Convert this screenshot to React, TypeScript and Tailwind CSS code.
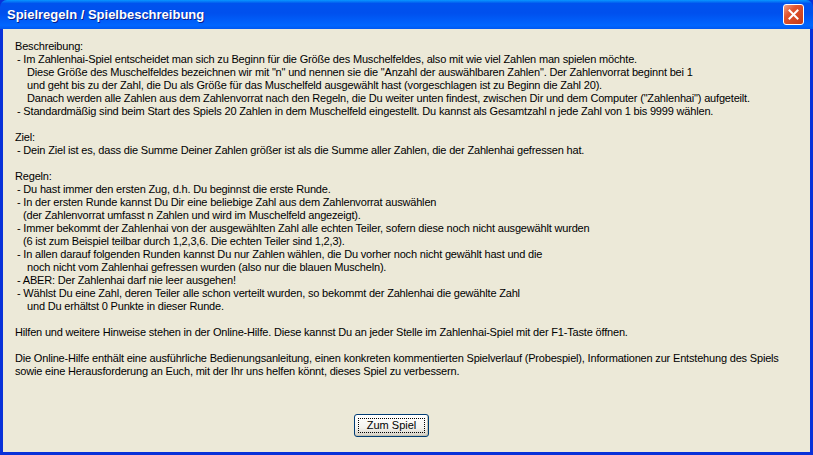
import React from "react";

type Line = { t: string; indent?: number };

const lines: (Line | null)[] = [
  { t: "Beschreibung:" },
  { t: "- Im Zahlenhai-Spiel entscheidet man sich zu Beginn für die Größe des Muschelfeldes, also mit wie viel Zahlen man spielen möchte.", indent: 2 },
  { t: "Diese Größe des Muschelfeldes bezeichnen wir mit \"n\" und nennen sie die \"Anzahl der auswählbaren Zahlen\". Der Zahlenvorrat beginnt bei 1", indent: 12 },
  { t: "und geht bis zu der Zahl, die Du als Größe für das Muschelfeld ausgewählt hast (vorgeschlagen ist zu Beginn die Zahl 20).", indent: 12 },
  { t: "Danach werden alle Zahlen aus dem Zahlenvorrat nach den Regeln, die Du weiter unten findest, zwischen Dir und dem Computer (\"Zahlenhai\") aufgeteilt.", indent: 12 },
  { t: "- Standardmäßig sind beim Start des Spiels 20 Zahlen in dem Muschelfeld eingestellt. Du kannst als Gesamtzahl n jede Zahl von 1 bis 9999 wählen.", indent: 2 },
  null,
  { t: "Ziel:" },
  { t: "- Dein Ziel ist es, dass die Summe Deiner Zahlen größer ist als die Summe aller Zahlen, die der Zahlenhai gefressen hat.", indent: 2 },
  null,
  { t: "Regeln:" },
  { t: "- Du hast immer den ersten Zug, d.h. Du beginnst die erste Runde.", indent: 2 },
  { t: "- In der ersten Runde kannst Du Dir eine beliebige Zahl aus dem Zahlenvorrat auswählen", indent: 2 },
  { t: "(der Zahlenvorrat umfasst n Zahlen und wird im Muschelfeld angezeigt).", indent: 8 },
  { t: "- Immer bekommt der Zahlenhai von der ausgewählten Zahl alle echten Teiler, sofern diese noch nicht ausgewählt wurden", indent: 2 },
  { t: "(6 ist zum Beispiel teilbar durch 1,2,3,6. Die echten Teiler sind 1,2,3).", indent: 8 },
  { t: "- In allen darauf folgenden Runden kannst Du nur Zahlen wählen, die Du vorher noch nicht gewählt hast und die", indent: 2 },
  { t: "noch nicht vom Zahlenhai gefressen wurden (also nur die blauen Muscheln).", indent: 12 },
  { t: "- ABER: Der Zahlenhai darf nie leer ausgehen!", indent: 2 },
  { t: "- Wählst Du eine Zahl, deren Teiler alle schon verteilt wurden, so bekommt der Zahlenhai die gewählte Zahl", indent: 2 },
  { t: "und Du erhältst 0 Punkte in dieser Runde.", indent: 12 },
  null,
  { t: "Hilfen und weitere Hinweise stehen in der Online-Hilfe. Diese kannst Du an jeder Stelle im Zahlenhai-Spiel mit der F1-Taste öffnen." },
  null,
  { t: "Die Online-Hilfe enthält eine ausführliche Bedienungsanleitung, einen konkreten kommentierten Spielverlauf (Probespiel), Informationen zur Entstehung des Spiels" },
  { t: "sowie eine Herausforderung an Euch, mit der Ihr uns helfen könnt, dieses Spiel zu verbessern." },
];

function CloseButton() {
  return (
    <div className="w-[21px] h-[21px] rounded-[3px] border border-white bg-[linear-gradient(135deg,#f0a089_0%,#e0542f_35%,#c63a17_100%)] flex items-center justify-center">
      <svg width="11" height="11" viewBox="0 0 11 11">
        <path d="M1.5 1.5 L9.5 9.5 M9.5 1.5 L1.5 9.5" stroke="#fff" strokeWidth="2" strokeLinecap="square" />
      </svg>
    </div>
  );
}

export default function App() {
  return (
    <div className="w-[813px] h-[455px] flex flex-col bg-[#0831d9] overflow-hidden font-['Liberation_Sans',Tahoma,sans-serif]">
      <div className="h-[29px] shrink-0 flex items-center justify-between pl-[7px] pr-[9px] rounded-t-[7px] bg-[linear-gradient(180deg,#0997ff_0%,#0053ee_12%,#0050ee_45%,#0066ff_88%,#0058f0_100%)]">
        <span className="text-white text-[13px] font-bold [text-shadow:1px_1px_0_#0a1e8a]">
          Spielregeln / Spielbeschreibung
        </span>
        <CloseButton />
      </div>
      <div className="flex-1 mx-[3px] mb-[3px] bg-[#ece9d8] flex flex-col">
        <div className="pt-[11px] pl-[12px] text-[11px] leading-[13px] tracking-[-0.18px] text-black">
          {lines.map((l, i) =>
            l ? (
              <div key={i} className="whitespace-nowrap" style={{ paddingLeft: l.indent ?? 0 }}>
                {l.t}
              </div>
            ) : (
              <div key={i} className="h-[13px]" />
            )
          )}
        </div>
        <div className="flex mt-[36px] ml-[351px]">
          <button className="w-[75px] h-[23px] rounded-[3px] border border-[#003c74] bg-[linear-gradient(180deg,#ffffff_0%,#f3f3ef_60%,#d6d0c5_100%)] shadow-[inset_-1px_-1px_0_#c5c2b2] p-[3px]">
            <span className="w-full h-full flex items-center justify-center border border-dotted border-black text-[11px] text-black">
              Zum Spiel
            </span>
          </button>
        </div>
      </div>
    </div>
  );
}
